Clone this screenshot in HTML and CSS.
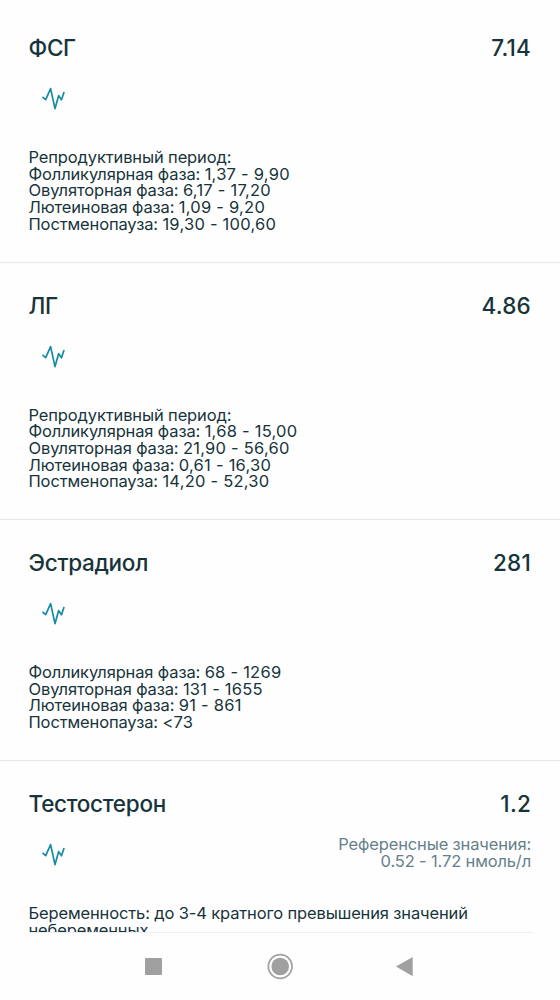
FILE: index.html
```html
<!DOCTYPE html>
<html lang="ru">
<head>
    <meta charset="UTF-8">
    <meta name="viewport" content="width=device-width, initial-scale=1.0">
    <title>Результаты анализов</title>
    <link rel="stylesheet" href="styles.css">
</head>
<body>
    <svg class="sprite">
        <symbol id="pulse" viewBox="0 0 24 24">
            <path d="M2 11.3L4.7 13.6L9.6 2.6L14 22.6L17.7 9.6L20.5 13.8L22.9 6.6"/>
        </symbol>
    </svg>

    <main class="results">
        <section class="card">
            <div class="card-header">
                <h2 class="name">ФСГ</h2>
                <span class="value">7.14</span>
            </div>
            <div class="card-meta">
                <svg class="pulse"><use href="#pulse"/></svg>
            </div>
            <div class="ranges">
                <div>Репродуктивный период:</div>
                <div>Фолликулярная фаза: <span class="num">1,37 - 9,90</span></div>
                <div>Овуляторная фаза: <span class="num">6,17 - 17,20</span></div>
                <div>Лютеиновая фаза: <span class="num">1,09 - 9,20</span></div>
                <div>Постменопауза: <span class="num">19,30 - 100,60</span></div>
            </div>
        </section>

        <section class="card">
            <div class="card-header">
                <h2 class="name">ЛГ</h2>
                <span class="value">4.86</span>
            </div>
            <div class="card-meta">
                <svg class="pulse"><use href="#pulse"/></svg>
            </div>
            <div class="ranges">
                <div>Репродуктивный период:</div>
                <div>Фолликулярная фаза: <span class="num">1,68 - 15,00</span></div>
                <div>Овуляторная фаза: <span class="num">21,90 - 56,60</span></div>
                <div>Лютеиновая фаза: <span class="num">0,61 - 16,30</span></div>
                <div>Постменопауза: <span class="num">14,20 - 52,30</span></div>
            </div>
        </section>

        <section class="card">
            <div class="card-header">
                <h2 class="name">Эстрадиол</h2>
                <span class="value">281</span>
            </div>
            <div class="card-meta">
                <svg class="pulse"><use href="#pulse"/></svg>
            </div>
            <div class="ranges">
                <div>Фолликулярная фаза: <span class="num">68 - 1269</span></div>
                <div>Овуляторная фаза: <span class="num">131 - 1655</span></div>
                <div>Лютеиновая фаза: <span class="num">91 - 861</span></div>
                <div>Постменопауза: <span class="num">&lt;73</span></div>
            </div>
        </section>

        <section class="card">
            <div class="card-header">
                <h2 class="name">Тестостерон</h2>
                <span class="value">1.2</span>
            </div>
            <div class="card-meta">
                <svg class="pulse"><use href="#pulse"/></svg>
                <div class="reference">Референсные значения:<br>0.52 - 1.72 нмоль/л</div>
            </div>
            <div class="ranges">
                <div>Беременность: до 3-4 кратного превышения значений</div>
                <div>небеременных</div>
            </div>
        </section>
    </main>

    <nav class="navbar">
        <svg viewBox="0 0 560 68">
            <rect x="145" y="26" width="17" height="17" rx="1"/>
            <circle cx="280.2" cy="34.5" r="8.8"/>
            <circle class="ring" cx="280.2" cy="34.5" r="11.8"/>
            <path d="M396 34.5L412.7 25V44.2Z"/>
        </svg>
    </nav>
</body>
</html>
```

FILE: styles.css
```css
* {
    box-sizing: border-box;
}

body {
    font-family: Inter, "Noto Sans", sans-serif;
    background-color: #fefefe;
    color: #17343b;
    margin: 0;
    height: 1000px;
    display: flex;
    flex-direction: column;
    overflow: hidden;
}

.sprite {
    display: none;
}

.results {
    height: 932px;
    padding-top: 5px;
    overflow: hidden;
}

.card {
    padding: 28px 29px 29.4px 28.5px;
    border-bottom: 1px solid #e6e8e8;
}

.card-header {
    display: flex;
    justify-content: space-between;
    height: 30px;
    line-height: 30px;
    font-size: 22.5px;
}

.name {
    margin: 0;
    font-size: 22.5px;
    font-weight: 500;
    letter-spacing: -0.3px;
}

.value {
    font-weight: 500;
    letter-spacing: 0.2px;
}

.card-meta {
    display: flex;
    justify-content: space-between;
    height: 86.2px;
    padding: 17px 0 0 12.5px;
}

.pulse {
    width: 24px;
    height: 24px;
    margin-top: 6px;
    fill: none;
    stroke: #168ba3;
    stroke-width: 1.7;
    stroke-linecap: round;
    stroke-linejoin: round;
}

.reference {
    color: #66808a;
    font-size: 16.5px;
    line-height: 16.6px;
    letter-spacing: -0.15px;
    text-align: right;
}

.ranges {
    font-size: 16.5px;
    line-height: 16.6px;
    letter-spacing: -0.14px;
    white-space: nowrap;
}

.num {
    letter-spacing: 0.24px;
}

.navbar {
    height: 68px;
}

.navbar::before {
    content: "";
    display: block;
    height: 1px;
    margin: 0 27px 0 29px;
    background-color: #efefef;
}

.navbar svg {
    display: block;
    width: 560px;
    height: 68px;
    margin-top: -1px;
    fill: #a0a0a0;
}

.navbar .ring {
    fill: none;
    stroke: #a0a0a0;
    stroke-width: 1.7;
}
```
